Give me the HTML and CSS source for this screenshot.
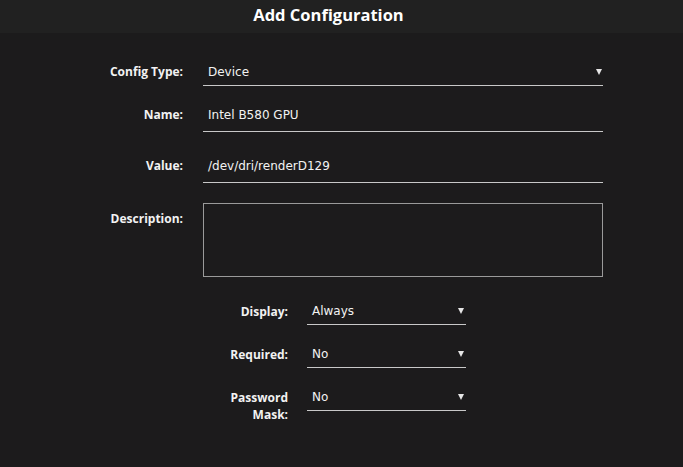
FILE: index.html
```html
<!DOCTYPE html>
<html>
<head>
<meta charset="utf-8">
<link rel="stylesheet" href="styles.css">
</head>
<body>
<div class="header">Add Configuration</div>
<div class="form">
  <div class="row r1">
    <div class="label">Config Type:</div>
    <div class="field select wide"><span>Device</span><svg class="arrow" width="6" height="6" viewBox="0 0 6 6"><path d="M0 0H6L3 6Z" fill="#e6e6e6"/></svg></div>
  </div>
  <div class="row r2">
    <div class="label tl">Name:</div>
    <div class="field text wide"><span>Intel B580 GPU</span></div>
  </div>
  <div class="row r3">
    <div class="label tl">Value:</div>
    <div class="field text wide"><span>/dev/dri/renderD129</span></div>
  </div>
  <div class="row r4">
    <div class="label desc">Description:</div>
    <div class="textarea"></div>
  </div>
  <div class="sub">
    <div class="row s1">
      <div class="label small">Display:</div>
      <div class="field select narrow"><span>Always</span><svg class="arrow" width="6" height="6" viewBox="0 0 6 6"><path d="M0 0H6L3 6Z" fill="#e6e6e6"/></svg></div>
    </div>
    <div class="row s2">
      <div class="label small">Required:</div>
      <div class="field select narrow"><span>No</span><svg class="arrow" width="6" height="6" viewBox="0 0 6 6"><path d="M0 0H6L3 6Z" fill="#e6e6e6"/></svg></div>
    </div>
    <div class="row s3">
      <div class="label small">Password Mask:</div>
      <div class="field select narrow"><span>No</span><svg class="arrow" width="6" height="6" viewBox="0 0 6 6"><path d="M0 0H6L3 6Z" fill="#e6e6e6"/></svg></div>
    </div>
  </div>
</div>
</body>
</html>
```
FILE: styles.css
```css
html, body {
  margin: 0;
  padding: 0;
  background: #1c1b1c;
  height: 100%;
}
body {
  font-family: "Open Sans", "Noto Sans", sans-serif;
  color: #f2f2f2;
}
.header {
  background: #212121;
  height: 33px;
  line-height: 29px;
  text-align: center;
  font-weight: 700;
  font-size: 16.5px;
  color: #fff;
  padding-right: 26px;
}
.form {
  padding-top: 27px;
}
.row {
  display: flex;
  align-items: flex-start;
}
.label {
  width: 183px;
  text-align: right;
  font-weight: 700;
  font-size: 12px;
  line-height: 24px;
  flex: none;
}
.label.tl { line-height: 26px; }
.field {
  margin-left: 20px;
  height: 25px;
  border-bottom: 1px solid #c8c8c8;
  display: flex;
  align-items: center;
  justify-content: space-between;
  padding: 0 1px 0 5px;
  box-sizing: content-box;
  font-family: "DejaVu Sans", sans-serif;
  font-size: 12px;
}
.field span { line-height: 25px; }
.field.text { height: 29px; align-items: flex-start; }
.field.text span { line-height: 26px; }
.wide { width: 394px; }
.narrow { width: 152px; margin-left: 19px; padding-right: 2px; }
.arrow { margin-top: -1px; }
.r1 { margin-bottom: 16px; }
.r2 { margin-bottom: 21px; }
.r3 { margin-bottom: 20px; }
.r4 { margin-bottom: 22px; }
.desc { padding-top: 4px; }
.textarea {
  margin-left: 20px;
  width: 398px;
  height: 72px;
  border: 1px solid #9a9a9a;
}
.sub {
  padding-left: 226px;
}
.small { width: 62px; line-height: 17px; padding-top: 4px; }
.s1, .s2 { margin-bottom: 17px; }
```
